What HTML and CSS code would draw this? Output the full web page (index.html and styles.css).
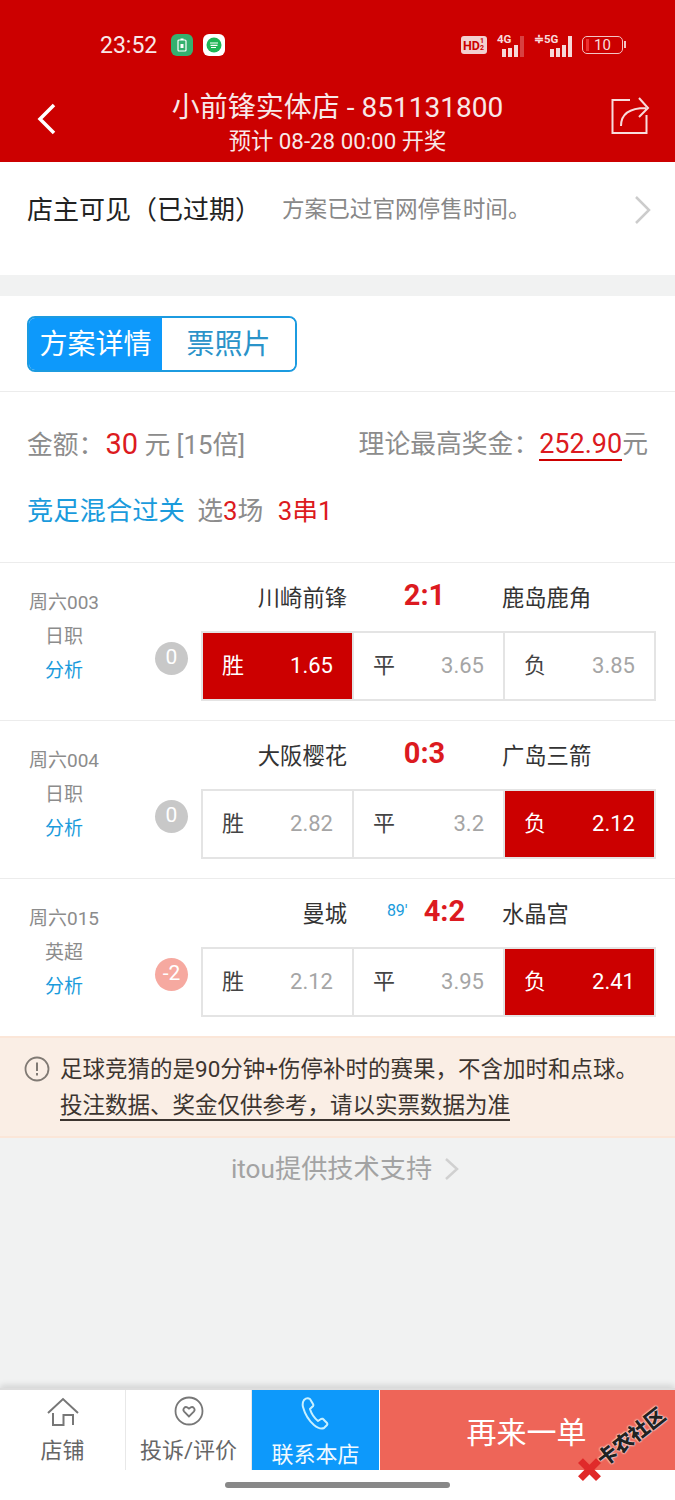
FILE: index.html
```html
<!DOCTYPE html>
<html lang="zh-CN">
<head>
  <meta charset="UTF-8">
  <meta name="viewport" content="width=device-width, initial-scale=1.0">
  <title>小前锋实体店</title>
  <link rel="stylesheet" href="styles.css">
</head>
<body>
  <div class="page">
    <div class="header">
      <div class="status-bar">
        <span class="time">23:52</span>
        <span class="app-icon app-green">
          <svg width="10" height="14" viewBox="0 0 10 14"><rect x="1" y="2" width="8" height="11" rx="1" fill="none" stroke="#fff" stroke-width="1.2"/><rect x="3.5" y="0.5" width="3" height="1.5" fill="#fff"/><rect x="3.5" y="6" width="3" height="4" fill="#fff"/></svg>
        </span>
        <span class="app-icon app-white">
          <svg width="16" height="16" viewBox="0 0 16 16"><circle cx="8" cy="8" r="7.5" fill="#1fb655"/><path d="M4 6h8M4.500 8.300h7M5 10.500h5" stroke="#fff" stroke-width="1.200" fill="none"/></svg>
        </span>
        <span class="status-right">
          <span class="hd">HD<small>1<br>2</small></span>
          <span class="signal"><em>4G</em><i class="b1"></i><i class="b2"></i><i class="b3"></i><i class="b4 off"></i></span>
          <span class="signal five"><em>≑5G</em><i class="b1"></i><i class="b2"></i><i class="b3"></i><i class="b4"></i></span>
          <span class="battery"><b></b>10</span>
        </span>
      </div>
      <div class="title-bar">
        <svg class="back" width="22" height="34" viewBox="0 0 22 34"><path d="M18 3 4 17l14 14" fill="none" stroke="#fff" stroke-width="3.500"/></svg>
        <div class="title-text">
          <div class="title">小前锋实体店 - 851131800</div>
          <div class="subtitle">预计 08-28 00:00 开奖</div>
        </div>
        <svg class="share" width="40" height="40" viewBox="0 0 40 40"><path d="M20 5H2.500v33h34V20" fill="none" stroke="#f8dcdc" stroke-width="2"/><path d="M11 31c0-12 8-18 25-18M29 3l9 10-9 9" fill="none" stroke="#f8dcdc" stroke-width="2"/></svg>
      </div>
    </div>

    <div class="notice">
      <span class="notice-title">店主可见（已过期）</span>
      <span class="notice-desc">方案已过官网停售时间。</span>
      <svg class="notice-arrow" width="18" height="30" viewBox="0 0 18 30"><path d="M2 2l13 13L2 28" fill="none" stroke="#ccc" stroke-width="2.500"/></svg>
    </div>

    <div class="tabs-row">
      <div class="tabs">
        <div class="tab active">方案详情</div>
        <div class="tab">票照片</div>
      </div>
    </div>

    <div class="summary">
      <div class="summary-line">
        <span>金额：<span class="red amount">30</span> 元 [15倍]</span>
        <span>理论最高奖金：<span class="red underline">252.90</span>元</span>
      </div>
      <div class="play-line">
        <span class="blue">竞足混合过关</span>
        <span class="play-count">选<span class="red">3</span>场</span>
        <span class="red">3串1</span>
      </div>
    </div>

    <div class="match">
      <div class="match-info">
        <span>周六003</span>
        <span>日职</span>
        <span class="blue">分析</span>
      </div>
      <div class="match-main">
        <div class="teams">
          <span class="home">川崎前锋</span>
          <span class="score"><b>2:1</b></span>
          <span class="away">鹿岛鹿角</span>
        </div>
        <div class="odds-row">
          <span class="handicap">0</span>
          <div class="odds">
            <div class="odd selected"><span>胜</span><span>1.65</span></div>
            <div class="odd"><span>平</span><span class="num">3.65</span></div>
            <div class="odd"><span>负</span><span class="num">3.85</span></div>
          </div>
        </div>
      </div>
    </div>

    <div class="match">
      <div class="match-info">
        <span>周六004</span>
        <span>日职</span>
        <span class="blue">分析</span>
      </div>
      <div class="match-main">
        <div class="teams">
          <span class="home">大阪樱花</span>
          <span class="score"><b>0:3</b></span>
          <span class="away">广岛三箭</span>
        </div>
        <div class="odds-row">
          <span class="handicap">0</span>
          <div class="odds">
            <div class="odd"><span>胜</span><span class="num">2.82</span></div>
            <div class="odd"><span>平</span><span class="num">3.2</span></div>
            <div class="odd selected"><span>负</span><span>2.12</span></div>
          </div>
        </div>
      </div>
    </div>

    <div class="match">
      <div class="match-info">
        <span>周六015</span>
        <span>英超</span>
        <span class="blue">分析</span>
      </div>
      <div class="match-main">
        <div class="teams">
          <span class="home">曼城</span>
          <span class="score"><i class="minute">89'</i><b>4:2</b></span>
          <span class="away">水晶宫</span>
        </div>
        <div class="odds-row">
          <span class="handicap minus">-2</span>
          <div class="odds">
            <div class="odd"><span>胜</span><span class="num">2.12</span></div>
            <div class="odd"><span>平</span><span class="num">3.95</span></div>
            <div class="odd selected"><span>负</span><span>2.41</span></div>
          </div>
        </div>
      </div>
    </div>

    <div class="warning">
      <svg class="warning-icon" width="26" height="26" viewBox="0 0 26 26"><circle cx="13" cy="13" r="11.500" fill="none" stroke="#807a74" stroke-width="1.800"/><path d="M13 6.500v8.500M13 17v2.500" stroke="#807a74" stroke-width="2" fill="none"/></svg>
      <div class="warning-text">
        <div>足球竞猜的是90分钟+伤停补时的赛果，不含加时和点球。</div>
        <div class="warning-link">投注数据、奖金仅供参考，请以实票数据为准</div>
      </div>
    </div>

    <div class="support">
      <span>itou提供技术支持</span>
      <svg width="16" height="24" viewBox="0 0 16 24"><path d="M2 2l11 10L2 22" fill="none" stroke="#d0d0d0" stroke-width="2.500"/></svg>
    </div>

    <div class="bottom-nav">
      <div class="nav-item nav-first">
        <svg width="32" height="32" viewBox="0 0 32 32"><path d="M1 17 16 3l15 14" fill="none" stroke="#777" stroke-width="2"/><path d="M6 17v12h10.500V19H26v10" fill="none" stroke="#777" stroke-width="2"/></svg>
        <span>店铺</span>
      </div>
      <div class="nav-item nav-second">
        <svg width="30" height="30" viewBox="0 0 30 30"><circle cx="15" cy="15" r="13.500" fill="none" stroke="#777" stroke-width="1.800"/><path d="M15 20.500 10.200 15.600c-2.200-2.500.8-5.800 3.300-4.100L15 12.700l1.500-1.200c2.500-1.700 5.500 1.600 3.300 4.100z" fill="none" stroke="#777" stroke-width="1.800"/></svg>
        <span>投诉/评价</span>
      </div>
      <div class="nav-item nav-call">
        <svg width="30" height="34" viewBox="0 0 30 34"><path d="M3 4q3-3 6-1l3 5q1 2-1 3l-2 2q2 7 8 12l3-2q2-1 3 1l3 3q1 2-1 3l-2 2q-4 2-10-3Q5 22 2 11 1 7 3 4z" fill="none" stroke="#c8f0ff" stroke-width="2" stroke-linejoin="round"/></svg>
        <span>联系本店</span>
      </div>
      <div class="nav-again">再来一单</div>
    </div>
    <div class="gesture-area"><div class="gesture-bar"></div></div>

    <div class="watermark">
      <svg width="26" height="26" viewBox="0 0 26 26"><path d="M4 4l18 18M22 4 4 22" stroke="#e02a2a" stroke-width="7" fill="none"/></svg>
      <span>卡农社区</span>
    </div>
  </div>
</body>
</html>
```

FILE: styles.css
```css
* {
  box-sizing: border-box;
}

body {
  margin: 0;
  font-family: Roboto, "Noto Sans CJK SC", sans-serif;
  background-color: #f1f2f2;
}

.page {
  position: relative;
  width: 675px;
  height: 1500px;
  overflow: hidden;
  display: flex;
  flex-direction: column;
}

.red {
  color: #dc1a20;
}

.blue {
  color: #1a9bdc;
}

/* header */
.header {
  height: 162px;
  flex: none;
  background-color: #cc0000;
  color: #fff;
  padding-top: 30px;
}

.status-bar {
  height: 30px;
  display: flex;
  align-items: center;
  padding: 0 52px 0 100px;
}

.time {
  font-size: 23px;
  margin-right: 14px;
  color: #f8e8e8;
}

.app-icon {
  width: 22px;
  height: 22px;
  border-radius: 6px;
  margin-right: 10px;
  display: flex;
  align-items: center;
  justify-content: center;
}

.app-green {
  background-color: #35b06f;
}

.app-white {
  background-color: #fff;
}

.status-right {
  margin-left: auto;
  display: flex;
  align-items: center;
  gap: 10px;
}

.hd {
  display: flex;
  align-items: center;
  width: 26px;
  height: 18px;
  padding: 0 2px;
  background-color: #f3d0d0;
  color: #cc0000;
  font-size: 12.500px;
  font-weight: 700;
  border-radius: 3px;
}

.hd small {
  font-size: 7px;
  line-height: 7px;
}

.signal {
  position: relative;
  width: 27px;
  height: 24px;
  display: flex;
  align-items: flex-end;
  justify-content: flex-end;
  gap: 2px;
}

.five {
  width: 38px;
}

.signal em {
  position: absolute;
  top: 0;
  left: 0;
  font-size: 11.500px;
  line-height: 12px;
  font-style: normal;
  font-weight: 700;
  white-space: nowrap;
  color: #f8dcdc;
}

.signal i {
  width: 4px;
  background-color: #f6d8d8;
}

.signal .b1 {
  height: 8px;
}

.signal .b2 {
  height: 9px;
}

.signal .b3 {
  height: 12px;
}

.signal .b4 {
  height: 21px;
}

.signal .off {
  opacity: 0.3;
}

.battery {
  position: relative;
  width: 41px;
  height: 18px;
  border: 1.500px solid #f3c4c4;
  border-radius: 5px;
  display: flex;
  align-items: center;
  gap: 5px;
  padding-left: 3px;
  font-size: 15px;
  line-height: 1;
  color: #f8dcdc;
}

.battery b {
  width: 3px;
  height: 12px;
  background-color: #ee3030;
}

.battery::after {
  content: "";
  position: absolute;
  right: -4px;
  top: 4px;
  width: 2px;
  height: 7px;
  background-color: #f3c4c4;
}

.title-bar {
  height: 102px;
  display: flex;
  align-items: flex-start;
  padding: 0 25px 0 36px;
}

.back {
  margin-top: 42px;
  flex: none;
}

.title-text {
  flex: 1;
  text-align: center;
  padding: 31px 0 0 7px;
}

.title {
  font-size: 28px;
  line-height: 34px;
  color: #f8e8e8;
}

.subtitle {
  font-size: 22.300px;
  line-height: 30px;
  margin-top: 1px;
  color: #f8e8e8;
}

.share {
  margin-top: 35px;
  flex: none;
}

/* notice */
.notice {
  height: 113px;
  flex: none;
  background-color: #fff;
  display: flex;
  align-items: flex-start;
  padding: 30px 23px 0 27px;
}

.notice-title {
  font-size: 26px;
  line-height: 36px;
  color: #222;
}

.notice-desc {
  font-size: 22.600px;
  line-height: 36px;
  color: #888;
  margin-left: 21px;
}

.notice-arrow {
  margin-left: auto;
  margin-top: 3px;
}

.tabs-row {
  height: 96px;
  flex: none;
  margin-top: 21px;
  padding: 20px 27px 0;
  background-color: #fff;
  border-bottom: 1px solid #ececec;
}

.tabs {
  width: 270px;
  height: 56px;
  display: flex;
  border: 2px solid #1c9be0;
  border-radius: 8px;
  overflow: hidden;
}

.tab {
  flex: 1;
  display: flex;
  align-items: center;
  justify-content: center;
  font-size: 28px;
  line-height: 34px;
  padding-top: 2px;
  color: #2a93c9;
  background-color: #fff;
}

.tab.active {
  flex: none;
  width: 133px;
  background-color: #0d99fb;
  color: #fff;
}

/* summary */
.summary {
  height: 171px;
  flex: none;
  background-color: #fff;
  padding: 34px 27px 0;
  border-bottom: 1px solid #ececec;
  font-size: 25.800px;
  color: #8c8c8c;
}

.summary-line {
  display: flex;
  justify-content: space-between;
  line-height: 36px;
}

.summary-line .red {
  font-size: 27px;
}

.summary-line .amount {
  font-size: 29px;
  margin-left: 1px;
}

.underline {
  display: inline-block;
  line-height: 30px;
  border-bottom: 2px solid #cc0000;
}

.play-line {
  margin-top: 30px;
  line-height: 36px;
}

.play-line .blue {
  font-size: 26.300px;
}

.play-count {
  margin-left: 6px;
  margin-right: 8px;
}

/* matches */
.match {
  height: 158px;
  flex: none;
  background-color: #fff;
  border-bottom: 1px solid #ececec;
  display: flex;
}

.match-info {
  width: 128px;
  flex: none;
  display: flex;
  flex-direction: column;
  align-items: center;
  padding-top: 23px;
  font-size: 19px;
  line-height: 34px;
  color: #8c8c8c;
}

.match-main {
  flex: 1;
  padding-right: 19px;
}

.teams {
  height: 68px;
  display: flex;
  align-items: flex-start;
  padding-top: 18px;
  font-size: 22.300px;
  line-height: 34px;
  color: #333;
}

.home {
  width: 219px;
  text-align: right;
}

.score {
  width: 155px;
  height: 30px;
  display: flex;
  align-items: center;
  justify-content: center;
  gap: 12px;
  margin-top: -1px;
}

.score b {
  font-size: 29px;
  color: #dc1a20;
  line-height: 30px;
}

.minute {
  font-style: normal;
  font-size: 16px;
  line-height: 20px;
  margin: 0 4px 0 3px;
  color: #1a9bdc;
}

.odds-row {
  display: flex;
  align-items: flex-start;
}

.handicap {
  width: 33px;
  height: 33px;
  flex: none;
  margin: 11px 13px 0 27px;
  border-radius: 50%;
  background-color: #c8c8c8;
  color: #fff;
  font-size: 21px;
  line-height: 30px;
  text-align: center;
}

.minus {
  background-color: #f6a9a0;
}

.odds {
  width: 455px;
  height: 70px;
  flex: none;
  display: flex;
  border: 2px solid #e4e4e4;
}

.odd {
  flex: 1;
  display: flex;
  align-items: center;
  justify-content: space-between;
  padding: 0 19px;
  font-size: 22px;
  line-height: 30px;
  color: #444;
  border-right: 2px solid #e4e4e4;
}

.odd:last-child {
  border-right: none;
}

.odd .num {
  color: #a5a5a5;
}

.odd.selected {
  background-color: #cc0000;
  color: #fff;
}

/* warning */
.warning {
  height: 102px;
  flex: none;
  margin-top: -1px;
  background-color: #faeee5;
  border-top: 2px solid #fbe6d8;
  border-bottom: 2px solid #fbe6d8;
  display: flex;
  padding: 13px 0 0 24px;
  color: #3c3530;
  font-size: 22.500px;
  line-height: 36px;
}

.warning-icon {
  flex: none;
  margin-top: 5px;
  margin-right: 10px;
}

.warning-link {
  display: inline-block;
  margin-top: 2px;
  line-height: 28px;
  border-bottom: 2px solid #3c3530;
}

.support {
  height: 66px;
  flex: none;
  display: flex;
  align-items: center;
  justify-content: center;
  gap: 12px;
  font-size: 26.200px;
  line-height: 36px;
  padding: 0 0 4px 16px;
  color: #a3a3a3;
}

/* bottom bar */
.bottom-nav {
  height: 82px;
  flex: none;
  margin-top: auto;
  display: flex;
  background-color: #fff;
  border-top: 2px solid #ddd;
  box-shadow: 0 -3px 6px rgba(0, 0, 0, 0.12);
}

.nav-item {
  width: 126px;
  flex: none;
  display: flex;
  flex-direction: column;
  align-items: center;
  font-size: 22px;
  line-height: 30px;
  color: #666;
  border-right: 1px solid #e8e8e8;
  padding-top: 6px;
}

.nav-item svg {
  flex: none;
}

.nav-first span {
  margin-top: 8px;
}

.nav-second span {
  margin-top: 10px;
}

.nav-call {
  width: 128px;
  background-color: #0d99fb;
  color: #f2f9ff;
  border-right: 1px solid #fff;
}

.nav-call span {
  margin-top: 10px;
}

.nav-again {
  flex: 1;
  display: flex;
  align-items: center;
  justify-content: center;
  padding-right: 2px;
  background-color: #ee6558;
  color: #fff;
  font-size: 30px;
}

.gesture-area {
  height: 30px;
  flex: none;
  background-color: #fff;
  padding-top: 12px;
}

.gesture-bar {
  width: 225px;
  height: 6px;
  margin: 0 auto;
  border-radius: 3px;
  background-color: #888;
}

.watermark {
  position: absolute;
  left: 568px;
  top: 1432px;
  display: flex;
  align-items: center;
  font-size: 20px;
  line-height: 26px;
  font-weight: 900;
  color: #222;
  white-space: nowrap;
  transform: rotate(-38deg);
  text-shadow: 0 0 2px #fff, 0 0 2px #fff;
}

.watermark svg {
  transform: rotate(38deg);
}
```
